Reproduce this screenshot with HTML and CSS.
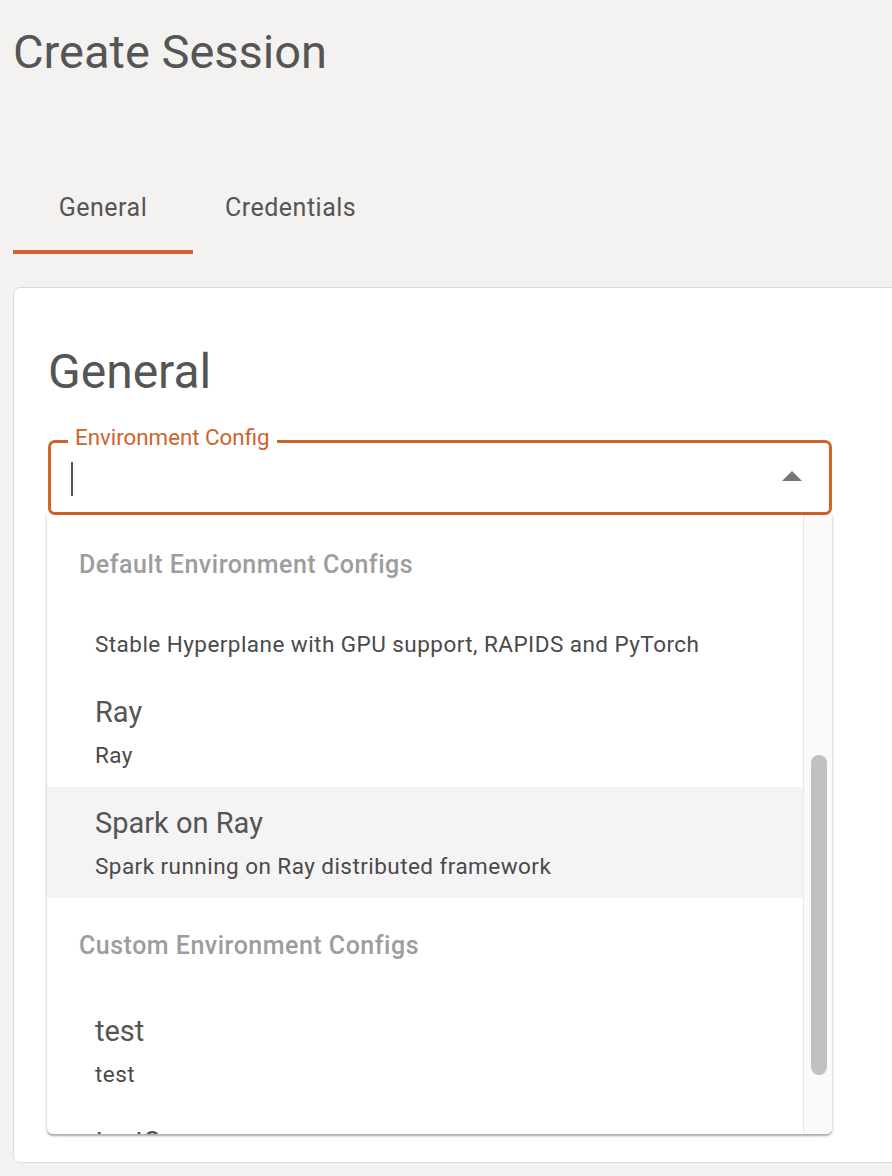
FILE: index.html
```html
<!DOCTYPE html>
<html lang="en">
<head>
<meta charset="utf-8">
<title>Create Session</title>
<link rel="stylesheet" href="styles.css">
</head>
<body>
<div class="page">
  <h1 class="title">Create Session</h1>
  <div class="tabs">
    <div class="tab active">General</div>
    <div class="tab">Credentials</div>
  </div>
  <div class="card">
    <h2 class="section">General</h2>
    <div class="field">
      <span class="label">Environment Config</span>
      <div class="input">
        <span class="caret"></span>
        <span class="spacer"></span>
        <span class="arrow"></span>
      </div>
      <div class="dropdown">
        <div class="list">
          <div class="group first">Default Environment Configs</div>
          <div class="clip">
            <div class="opt-sub">Stable Hyperplane with GPU support, RAPIDS and PyTorch</div>
          </div>
          <div class="option">
            <div class="opt-title">Ray</div>
            <div class="opt-sub">Ray</div>
          </div>
          <div class="option hover">
            <div class="opt-title">Spark on Ray</div>
            <div class="opt-sub">Spark running on Ray distributed framework</div>
          </div>
          <div class="group">Custom Environment Configs</div>
          <div class="option test">
            <div class="opt-title">test</div>
            <div class="opt-sub">test</div>
          </div>
          <div class="option test">
            <div class="opt-title">test2</div>
            <div class="opt-sub">test2</div>
          </div>
        </div>
        <div class="track"><div class="thumb"></div></div>
      </div>
    </div>
  </div>
</div>
</body>
</html>
```
FILE: styles.css
```css
* { box-sizing: border-box; }
html, body {
  margin: 0;
  padding: 0;
  background: #f3f2f1;
  overflow: hidden;
}
body {
  font-family: Roboto, "Liberation Sans", Arial, sans-serif;
  color: #555;
}
.page {
  padding: 24px 0 0 13px;
  height: 1176px;
}
.title {
  margin: 0;
  font-size: 47px;
  line-height: 56px;
  font-weight: 400;
  color: #555;
}
.tabs {
  display: flex;
  margin-top: 78px;
}
.tab {
  min-width: 180px;
  height: 96px;
  padding: 6px 32px 0;
  display: flex;
  align-items: center;
  justify-content: center;
  font-size: 25px;
  letter-spacing: 0.02em;
  color: #555;
  border-bottom: 4px solid transparent;
}
.tab.active {
  border-bottom-color: #d0622c;
}
.card {
  margin-top: 33px;
  margin-right: -40px;
  background: #fff;
  border: 1px solid #dadada;
  border-radius: 7px;
  height: 876px;
  padding: 56px 0 0 34px;
}
.section {
  margin: 0;
  font-size: 48px;
  line-height: 56px;
  font-weight: 400;
  color: #555;
}
.field {
  position: relative;
  margin-top: 40px;
  width: 784px;
}
.label {
  position: absolute;
  left: 20px;
  top: -15px;
  padding: 0 7px;
  background: #fff;
  font-size: 22.3px;
  line-height: 24px;
  color: #d0622c;
}
.input {
  height: 75px;
  border: 3px solid #d0622c;
  border-radius: 7px;
  display: flex;
  align-items: center;
  padding: 0 27px 0 20px;
}
.caret {
  width: 2px;
  height: 34px;
  background: #555;
  margin-top: 2px;
}
.spacer { flex: 1; }
.arrow {
  width: 0;
  height: 0;
  border-left: 10px solid transparent;
  border-right: 10px solid transparent;
  border-bottom: 10px solid #757575;
  margin-top: -4px;
}
.dropdown {
  position: absolute;
  left: -1px;
  top: 75px;
  width: 785px;
  height: 619px;
  background: #fff;
  border-radius: 0 0 6px 6px;
  box-shadow: 0 2px 2px rgba(0,0,0,0.28), 0 1px 5px rgba(0,0,0,0.12);
  display: flex;
  overflow: hidden;
}
.list {
  flex: 1;
  overflow: hidden;
}
.group {
  height: 96px;
  line-height: 96px;
  padding-left: 32px;
  font-size: 25px;
  font-weight: 500;
  color: #9d9d9d;
  letter-spacing: 0.02em;
}
.group.first {
  height: 100px;
  line-height: 100px;
}
.clip {
  height: 61px;
  padding: 14px 0 0 48px;
}
.clip .opt-sub { margin-top: 0; }
.option {
  height: 111px;
  padding: 16px 0 0 48px;
}
.option.test { padding-top: 17px; }
.option.hover { background: #f4f4f4; }
.opt-title {
  font-size: 29px;
  line-height: 40px;
  color: #555;
}
.opt-sub {
  margin-top: 8px;
  font-size: 22.5px;
  line-height: 30px;
  letter-spacing: 0.02em;
  color: #4a4a4a;
  white-space: nowrap;
}
.track {
  width: 29px;
  background: #fafafa;
  border-left: 1px solid #e8e8e8;
  padding: 240px 0 0 7px;
}
.thumb {
  width: 16px;
  height: 320px;
  border-radius: 8px;
  background: #c1c1c1;
}
```
